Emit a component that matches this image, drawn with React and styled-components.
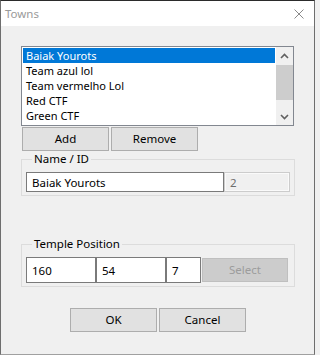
import styled, { createGlobalStyle } from 'styled-components';

const GlobalStyle = createGlobalStyle`
  html, body {
    margin: 0;
    padding: 0;
    background: #f0f0f0;
  }
  * {
    box-sizing: border-box;
  }
`;

const Window = styled.div`
  width: 315px;
  height: 355px;
  display: flex;
  flex-direction: column;
  background: #f0f0f0;
  border: 1px solid #6e6e6e;
  border-top-color: #2b2b2b;
  border-bottom-color: #a0a0a0;
  font-family: 'Noto Sans', 'Open Sans', sans-serif;
  font-size: 11px;
  color: #000;
`;

const TitleBar = styled.div`
  height: 25px;
  flex-shrink: 0;
  display: flex;
  align-items: center;
  justify-content: space-between;
  background: #fff;
  padding: 0 10px 0 4px;
  color: #9a9a9a;
`;

const Title = styled.span`
  font-size: 11.5px;
  line-height: 16px;
`;

const Content = styled.div`
  display: flex;
  flex-direction: column;
  padding: 20px 20px 0 20px;
`;

const ListBox = styled.div`
  width: 273px;
  height: 80px;
  display: flex;
  background: #fff;
  border: 1px solid #828790;
`;

const Items = styled.div`
  flex: 1;
  padding: 1px;
  display: flex;
  flex-direction: column;
`;

const Item = styled.div`
  height: 15px;
  line-height: 15px;
  padding-left: 3px;
  white-space: nowrap;
  overflow: hidden;
  background: ${(p) => (p.selected ? '#0078d7' : 'transparent')};
  color: ${(p) => (p.selected ? '#fff' : '#000')};
`;

const ScrollBar = styled.div`
  width: 17px;
  display: flex;
  flex-direction: column;
  background: #f0f0f0;
`;

const ScrollArrow = styled.div`
  height: 17px;
  display: flex;
  align-items: center;
  justify-content: center;
`;

const ScrollTrack = styled.div`
  flex: 1;
  padding-top: 1px;
`;

const Thumb = styled.div`
  height: 35px;
  background: #cdcdcd;
`;

const ButtonRow = styled.div`
  display: flex;
  gap: 2px;
  margin: ${(p) => p.top || 1}px 0 0 1px;
  justify-content: ${(p) => (p.center ? 'center' : 'flex-start')};
`;

const Button = styled.button`
  width: 87px;
  height: 24px;
  padding: 0;
  background: ${(p) => (p.disabled ? '#cccccc' : '#e1e1e1')};
  border: 1px solid ${(p) => (p.disabled ? '#bfbfbf' : '#adadad')};
  color: ${(p) => (p.disabled ? '#9c9c9c' : '#000')};
  font-family: inherit;
  font-size: 11.5px;
  line-height: 16px;
`;

const Group = styled.fieldset`
  width: 274px;
  margin: ${(p) => p.top || 0}px 0 0 0;
  padding: 5px 4px 3px 4px;
  border: 1px solid #dcdcdc;
  display: flex;
  align-items: center;
`;

const Legend = styled.legend`
  padding: 0 2px;
  margin-left: 6px;
  line-height: 16px;
  font-size: 11.5px;
`;

const Field = styled.div`
  width: ${(p) => p.w}px;
  height: ${(p) => p.h || 20}px;
  display: flex;
  align-items: center;
  padding-left: 5px;
  background: ${(p) => (p.disabled ? '#f0f0f0' : '#fff')};
  border: 1px solid ${(p) => (p.disabled ? '#cccccc' : '#7a7a7a')};
  box-shadow: ${(p) => (p.disabled ? 'inset 0 0 0 1px #fafafa' : 'none')};
  color: ${(p) => (p.disabled ? '#6d6d6d' : '#000')};
  white-space: nowrap;
  font-size: 11.5px;
`;

const SelectButton = styled(Button)`
  height: 24px;
  width: 86px;
  margin-left: 1px;
`;

const Chevron = ({ down }) => (
  <svg width="9" height="6" viewBox="0 0 9 6">
    <path
      d={down ? 'M1 1 L4.5 4.5 L8 1' : 'M1 5 L4.5 1.5 L8 5'}
      fill="none"
      stroke="#606060"
      strokeWidth="1.6"
    />
  </svg>
);

const towns = ['Baiak Yourots', 'Team azul lol', 'Team vermelho Lol', 'Red CTF', 'Green CTF'];

export default function App() {
  return (
    <>
      <GlobalStyle />
      <Window>
        <TitleBar>
          <Title>Towns</Title>
          <svg width="10" height="10" viewBox="0 0 10 10">
            <path d="M0.5 0.5 L9.5 9.5 M9.5 0.5 L0.5 9.5" stroke="#8a8a8a" strokeWidth="1" />
          </svg>
        </TitleBar>
        <Content>
          <ListBox>
            <Items>
              {towns.map((t, i) => (
                <Item key={t} selected={i === 0}>
                  {t}
                </Item>
              ))}
            </Items>
            <ScrollBar>
              <ScrollArrow>
                <Chevron />
              </ScrollArrow>
              <ScrollTrack>
                <Thumb />
              </ScrollTrack>
              <ScrollArrow>
                <Chevron down />
              </ScrollArrow>
            </ScrollBar>
          </ListBox>

          <ButtonRow>
            <Button>Add</Button>
            <Button>Remove</Button>
          </ButtonRow>

          <Group>
            <Legend>Name / ID</Legend>
            <Field w={198}>Baiak Yourots</Field>
            <Field w={66} disabled>
              2
            </Field>
          </Group>

          <Group top={40}>
            <Legend>Temple Position</Legend>
            <Field w={70} h={26}>
              160
            </Field>
            <Field w={70} h={26}>
              54
            </Field>
            <Field w={35} h={26}>
              7
            </Field>
            <SelectButton disabled>Select</SelectButton>
          </Group>

          <ButtonRow center top={21}>
            <Button>OK</Button>
            <Button>Cancel</Button>
          </ButtonRow>
        </Content>
      </Window>
    </>
  );
}
